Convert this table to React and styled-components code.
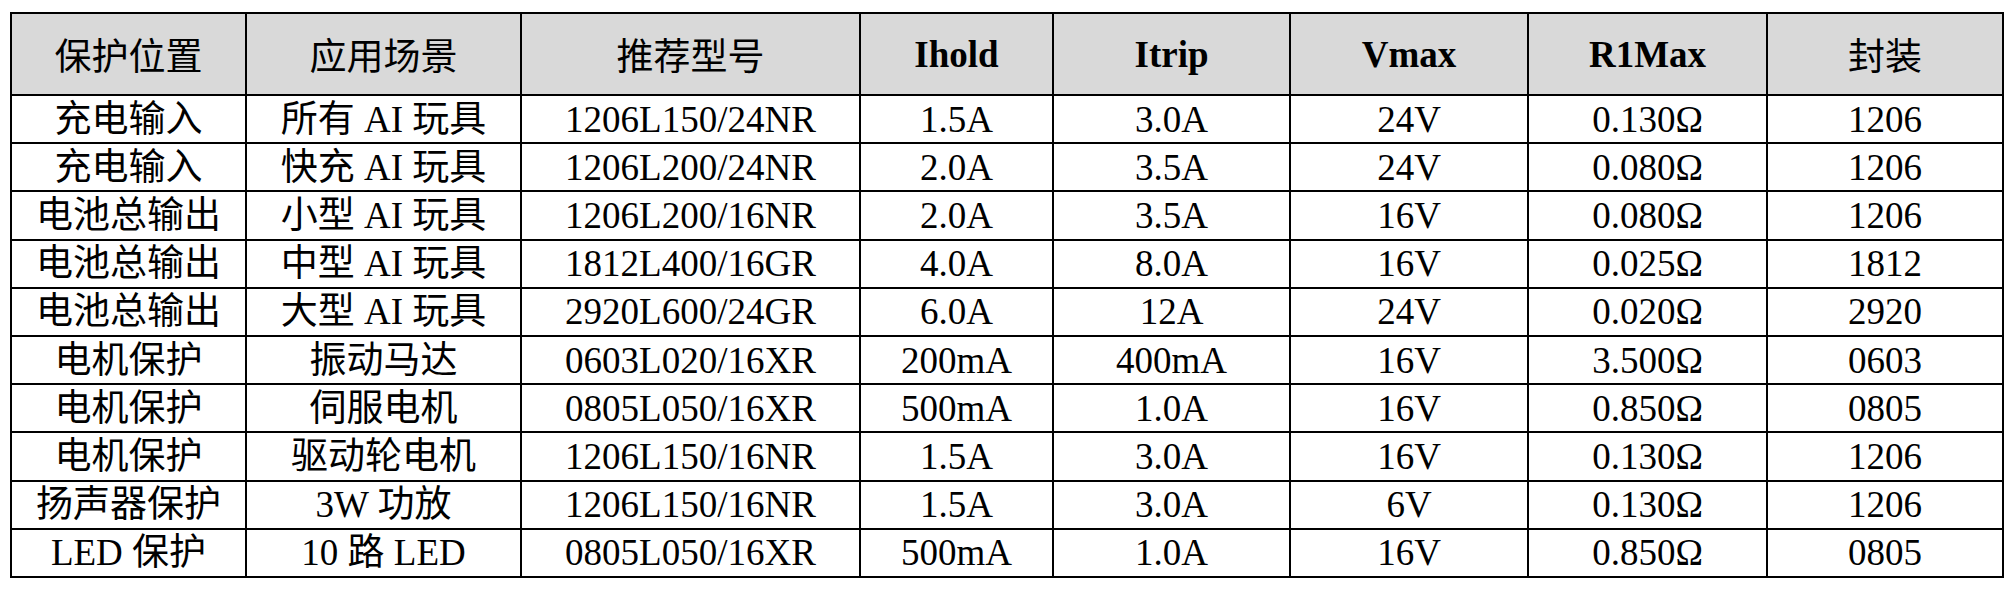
import React from "react";
import styled, { createGlobalStyle } from "styled-components";

const GlobalStyle = createGlobalStyle`
  html, body {
    margin: 0;
    padding: 0;
    background: #ffffff;
  }
`;

const Page = styled.div`
  padding: 12px 0 0 10px;
`;

const Table = styled.table`
  width: 1992px;
  border-collapse: collapse;
  table-layout: fixed;
  font-family: "Liberation Serif", "Noto Sans CJK SC", serif;
  font-size: 37px;
  color: #000;
  border: 2px solid #000;
`;

const HeadCell = styled.th`
  height: 80px;
  padding: 0;
  background: #d9d9d9;
  border: 2px solid #000;
  text-align: center;
  vertical-align: middle;
  font-weight: ${(p) => (p.$bold ? 700 : 400)};
`;

const Cell = styled.td`
  height: 46.2px;
  padding: 0;
  border: 2px solid #000;
  text-align: center;
  vertical-align: middle;
  line-height: 1;
  white-space: nowrap;
`;

// column widths measured from the screenshot
const widths = [235, 275, 339, 193, 237, 238, 239, 236];

const columns = [
  { label: "保护位置" },
  { label: "应用场景" },
  { label: "推荐型号" },
  { label: "Ihold", bold: true },
  { label: "Itrip", bold: true },
  { label: "Vmax", bold: true },
  { label: "R1Max", bold: true },
  { label: "封装" },
];

const rows = [
  ["充电输入", "所有 AI 玩具", "1206L150/24NR", "1.5A", "3.0A", "24V", "0.130Ω", "1206"],
  ["充电输入", "快充 AI 玩具", "1206L200/24NR", "2.0A", "3.5A", "24V", "0.080Ω", "1206"],
  ["电池总输出", "小型 AI 玩具", "1206L200/16NR", "2.0A", "3.5A", "16V", "0.080Ω", "1206"],
  ["电池总输出", "中型 AI 玩具", "1812L400/16GR", "4.0A", "8.0A", "16V", "0.025Ω", "1812"],
  ["电池总输出", "大型 AI 玩具", "2920L600/24GR", "6.0A", "12A", "24V", "0.020Ω", "2920"],
  ["电机保护", "振动马达", "0603L020/16XR", "200mA", "400mA", "16V", "3.500Ω", "0603"],
  ["电机保护", "伺服电机", "0805L050/16XR", "500mA", "1.0A", "16V", "0.850Ω", "0805"],
  ["电机保护", "驱动轮电机", "1206L150/16NR", "1.5A", "3.0A", "16V", "0.130Ω", "1206"],
  ["扬声器保护", "3W 功放", "1206L150/16NR", "1.5A", "3.0A", "6V", "0.130Ω", "1206"],
  ["LED 保护", "10 路 LED", "0805L050/16XR", "500mA", "1.0A", "16V", "0.850Ω", "0805"],
];

export default function App() {
  return (
    <>
      <GlobalStyle />
      <Page>
        <Table>
          <colgroup>
            {widths.map((w, i) => (
              <col key={i} style={{ width: w }} />
            ))}
          </colgroup>
          <thead>
            <tr>
              {columns.map((c) => (
                <HeadCell key={c.label} $bold={c.bold}>
                  {c.label}
                </HeadCell>
              ))}
            </tr>
          </thead>
          <tbody>
            {rows.map((r, i) => (
              <tr key={i}>
                {r.map((v, j) => (
                  <Cell key={j}>{v}</Cell>
                ))}
              </tr>
            ))}
          </tbody>
        </Table>
      </Page>
    </>
  );
}
